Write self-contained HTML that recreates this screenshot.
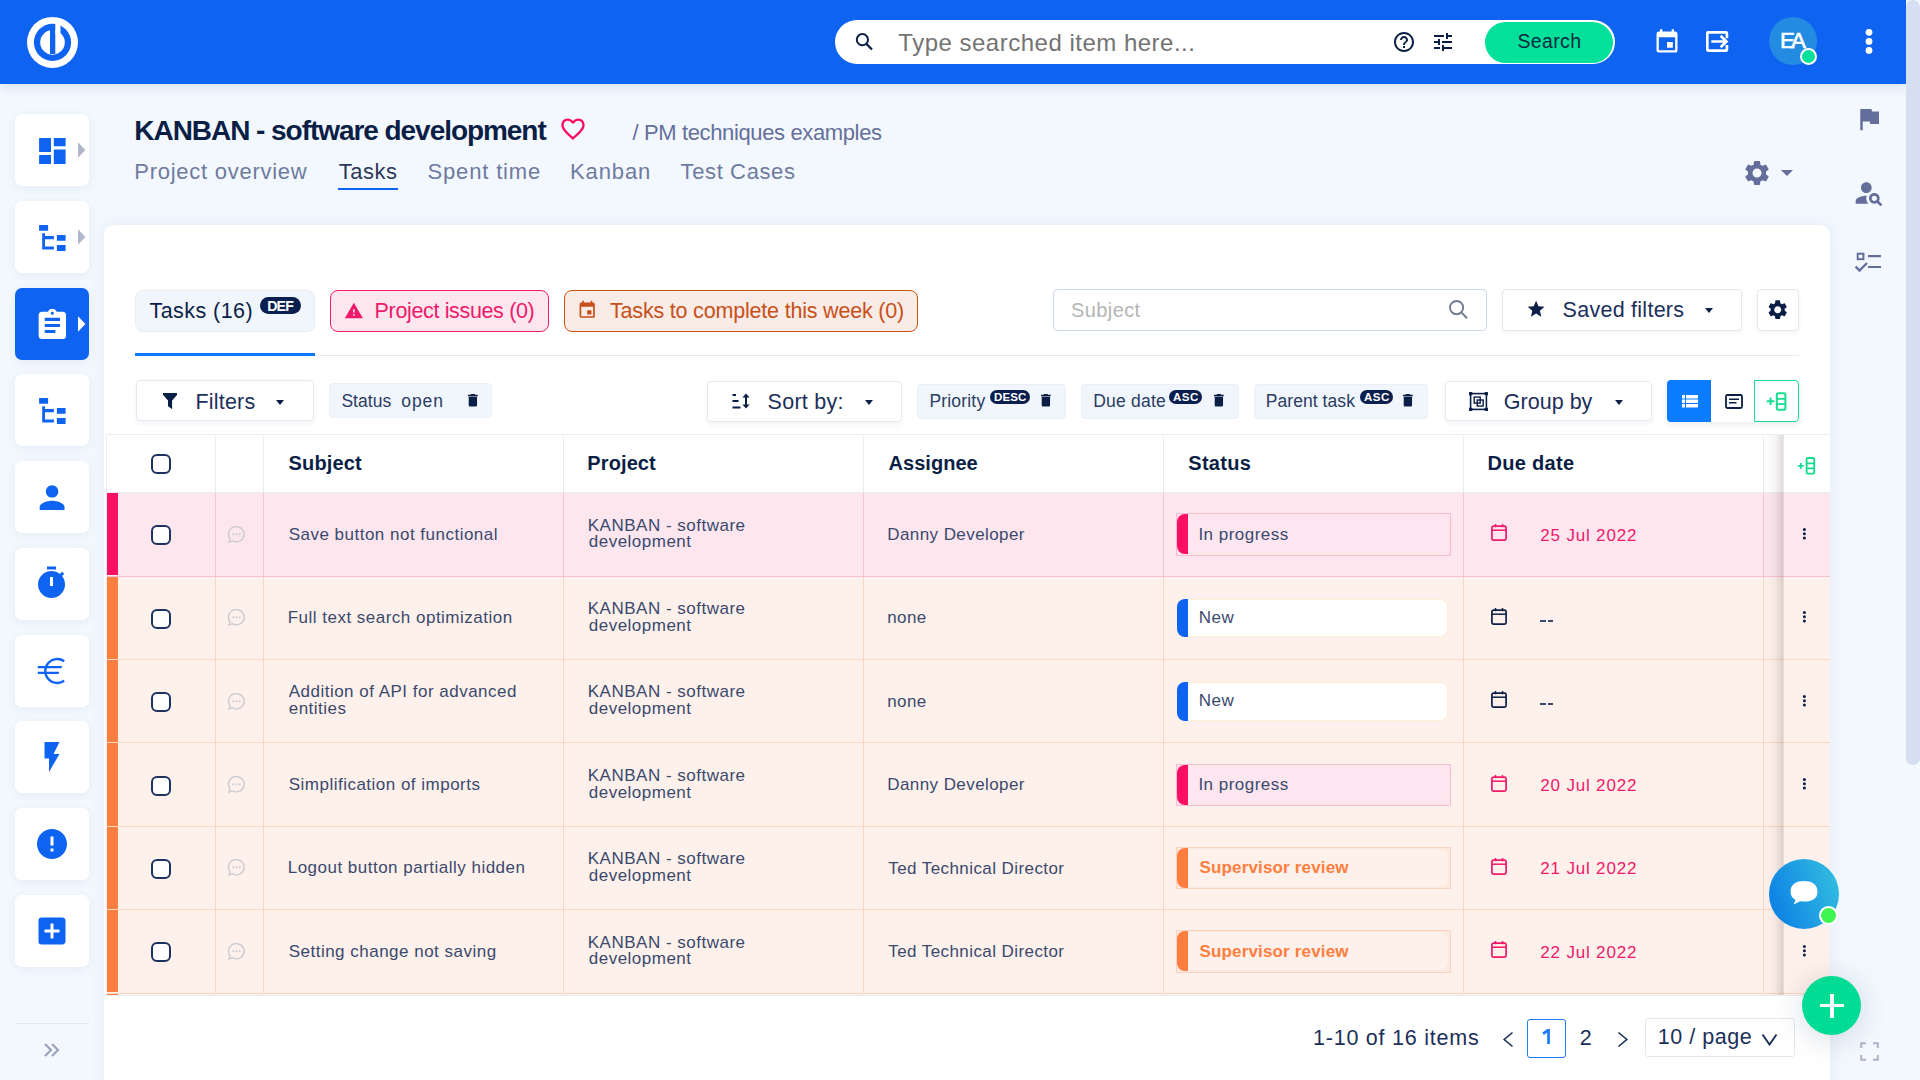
<!DOCTYPE html>
<html><head><meta charset="utf-8">
<style>
*{box-sizing:border-box;margin:0;padding:0}
html,body{width:1920px;height:1080px;overflow:hidden}
body{font-family:"Liberation Sans",sans-serif;background:#f3f8fe;position:relative;color:#0b1f46}
svg{position:absolute;display:block}
#hdr{position:absolute;left:0;top:0;width:1906px;height:84px;background:#0f63f1;box-shadow:0 3px 12px rgba(30,60,120,.13)}
#sb{position:absolute;left:1906px;top:0;width:14px;height:1080px;background:#f3f8fe}
#sbthumb{position:absolute;left:1906px;top:0;width:14px;height:765px;background:#d6dff1;border-radius:7px}
.navc{position:absolute;left:15px;width:74px;height:72px;background:#fff;border-radius:7px;box-shadow:0 2px 10px rgba(40,70,140,.07)}
.navc.act{background:#0f63f1}
.navc svg{left:0;top:0}
.txt{position:absolute;white-space:nowrap;line-height:1}
#card{position:absolute;left:104px;top:225px;width:1726px;height:900px;background:#fff;border-radius:10px;box-shadow:0 0 16px rgba(40,80,160,.07)}
</style></head>
<body>
<div id="hdr"></div><div id="sb"></div><div id="sbthumb"></div>
<svg style="left:0px;top:0px;" width="110" height="84" viewBox="0 0 110 84">
 <circle cx="52.5" cy="42.4" r="25.5" fill="#fff"/>
 <circle cx="52.5" cy="42.4" r="18.6" fill="#0f63f1"/>
 <circle cx="52.5" cy="42.4" r="12.3" fill="#fff"/>
 <rect x="50" y="24" width="5.3" height="30" fill="#0f63f1"/>
 <rect x="55.3" y="23" width="5.2" height="10.6" fill="#fff"/></svg>
<div style="position:absolute;left:835px;top:20px;width:780px;height:44px;background:#fff;border-radius:22px"></div>
<svg style="left:853px;top:31px;" width="22" height="22" viewBox="0 0 22 22"><circle cx="9.4" cy="8.7" r="5.6" fill="none" stroke="#0b1f46" stroke-width="2"/><path d="M13.4 12.9l5.6 5.6" stroke="#0b1f46" stroke-width="2.2"/></svg>
<div class="txt" style="left:898.30px;top:31.03px;font-size:24px;color:#737373;letter-spacing:0.50px;">Type searched item here...</div>
<svg style="left:1392px;top:30px;" width="24" height="24" viewBox="0 0 24 24"><path fill="#0b1f46" d="M11 18h2v-2h-2v2zm1-16C6.48 2 2 6.48 2 12s4.48 10 10 10 10-4.48 10-10S17.52 2 12 2zm0 18c-4.41 0-8-3.59-8-8s3.59-8 8-8 8 3.59 8 8-3.59 8-8 8zm0-14c-2.21 0-4 1.79-4 4h2c0-1.1.9-2 2-2s2 .9 2 2c0 2-3 1.750-3 5h2c0-2.25 3-2.5 3-5 0-2.21-1.79-4-4-4z"/></svg>
<svg style="left:1431px;top:30px;" width="24" height="24" viewBox="0 0 24 24"><path fill="#0b1f46" d="M3 17v2h6v-2H3zM3 5v2h10V5H3zm10 16v-2h8v-2h-8v-2h-2v6h2zM7 9v2H3v2h4v2h2V9H7zm14 4v-2H11v2h10zm-6-4h2V7h4V5h-4V3h-2v6z"/></svg>
<div style="position:absolute;left:1485px;top:22px;width:128px;height:41px;background:#02e09a;border-radius:21px"></div>
<div class="txt" style="left:1517.50px;top:32.24px;font-size:19.5px;color:#0b2a40;letter-spacing:0.35px;">Search</div>
<svg style="left:1653px;top:28px;" width="28" height="28" viewBox="0 0 24 24"><path fill="#fff" d="M17 12h-5v5h5v-5zM16 1v2H8V1H6v2H5c-1.11 0-1.99.9-1.99 2L3 19a2 2 0 0 0 2 2h14c1.1 0 2-.9 2-2V5c0-1.1-.9-2-2-2h-1V1h-2zm3 18H5V8h14v11z"/></svg>
<svg style="left:1706px;top:31px;" width="22.5" height="21" viewBox="0 0 22.5 21"><path fill="none" stroke="#fff" stroke-width="2.7" d="M20.9 7.2V2.6q0-1.3-1.3-1.3H2.6q-1.3 0-1.3 1.3v15.8q0 1.3 1.3 1.3h17q1.3 0 1.3-1.3v-4.3"/><path fill="none" stroke="#fff" stroke-width="2.7" d="M5.3 10.5h15.2M14.6 4.8l5.8 5.7-5.8 5.7"/></svg>
<div style="position:absolute;left:1769px;top:17px;width:48px;height:48px;border-radius:50%;background:#238be2"></div>
<div class="txt" style="left:1780.00px;top:30.39px;font-size:22.4px;color:#fff;letter-spacing:-3.93px;-webkit-text-stroke:.6px #fff;">EA</div>
<div style="position:absolute;left:1799.5px;top:47.5px;width:17.5px;height:17.5px;border-radius:50%;background:#02e09a;border:2.5px solid #fff"></div>
<svg style="left:1857px;top:26px;" width="24" height="32" viewBox="0 0 24 32"><circle cx="12" cy="6.3" r="3.4" fill="#fff"/><circle cx="12" cy="15.4" r="3.4" fill="#fff"/><circle cx="12" cy="24.4" r="3.4" fill="#fff"/></svg>
<div class="navc" style="top:114.0px"><svg width="74" height="72" viewBox="0 0 74 72"><path fill="#0f63f1" d="M24.1 24h11.9v14H24.1zM24.1 41h11.9v9H24.1zM38.8 24h11.8v8.3H38.8zM38.8 35.5h11.8V50H38.8z"/><path fill="#b1b6cb" d="M63 28.2l7.4 7.8-7.4 7.8z"/></svg></div>
<div class="navc" style="top:200.78px"><svg width="74" height="72" viewBox="0 0 74 72"><path fill="#0f63f1" d="M24.1 24h9v5.7h-9zM27.2 32.3h2.8v16.3h-2.8zM27.2 35.1h11.7v3.1H27.2zM27.2 45.5h11.7v3.1H27.2zM41.9 34.1h8.7v5.7h-8.7zM41.9 44.1h8.7v5.8h-8.7z"/><path fill="#b1b6cb" d="M63 28.2l7.4 7.8-7.4 7.8z"/></svg></div>
<div class="navc act" style="top:287.56px"><svg width="74" height="72" viewBox="0 0 74 72"><g transform="translate(19.1 19.2) scale(1.52)"><path fill="#fff" d="M19 3h-4.18C14.4 1.84 13.3 1 12 1c-1.3 0-2.4.84-2.82 2H5c-1.1 0-2 .9-2 2v14c0 1.1.9 2 2 2h14c1.1 0 2-.9 2-2V5c0-1.1-.9-2-2-2zm-7 0c.55 0 1 .45 1 1s-.45 1-1 1-1-.45-1-1 .45-1 1-1zm2 14H7v-2h7v2zm3-4H7v-2h10v2zm0-4H7V7h10v2z"/></g><path fill="#fff" d="M63 28.2l7.4 7.8-7.4 7.8z"/></svg></div>
<div class="navc" style="top:374.34px"><svg width="74" height="72" viewBox="0 0 74 72"><path fill="#0f63f1" d="M24.1 24h9v5.7h-9zM27.2 32.3h2.8v16.3h-2.8zM27.2 35.1h11.7v3.1H27.2zM27.2 45.5h11.7v3.1H27.2zM41.9 34.1h8.7v5.7h-8.7zM41.9 44.1h8.7v5.8h-8.7z"/></svg></div>
<div class="navc" style="top:461.12px"><svg width="74" height="72" viewBox="0 0 74 72"><g transform="translate(18.5 18) scale(1.55)"><path fill="#0f63f1" d="M12 12c2.21 0 4-1.79 4-4s-1.79-4-4-4-4 1.79-4 4 1.79 4 4 4zm0 2c-2.67 0-8 1.34-8 4v2h16v-2c0-2.66-5.33-4-8-4z"/></g></svg></div>
<div class="navc" style="top:547.9px"><svg width="74" height="72" viewBox="0 0 74 72"><g transform="translate(18.5 17) scale(1.5)"><path fill="#0f63f1" d="M15 1H9v2h6V1zm4.03 6.39l1.42-1.42c-.43-.51-.9-.99-1.41-1.41l-1.42 1.42C16.07 4.74 14.12 4 12 4c-4.97 0-9 4.03-9 9s4.02 9 9 9 9-4.03 9-9c0-2.12-.74-4.07-1.97-5.61zM13 14h-2V8h2v6z"/></g></svg></div>
<div class="navc" style="top:634.68px"><svg width="74" height="72" viewBox="0 0 74 72"><path fill="none" stroke="#0f63f1" stroke-width="2.3" d="M49.2 26.2A12 12 0 1 0 49.2 45.8"/><path fill="#0f63f1" d="M22.8 30.9h24.4l-.9 2.3H22.8zM22.8 36.7h21.6l-.9 2.3H22.8z"/></svg></div>
<div class="navc" style="top:721.46px"><svg width="74" height="72" viewBox="0 0 74 72"><g transform="translate(19 18) scale(1.5)"><path fill="#0f63f1" d="M7 2v11h3v9l7-12h-4l4-8z"/></g></svg></div>
<div class="navc" style="top:808.24px"><svg width="74" height="72" viewBox="0 0 74 72"><g transform="translate(19 18) scale(1.5)"><path fill="#0f63f1" d="M12 2C6.48 2 2 6.48 2 12s4.48 10 10 10 10-4.48 10-10S17.52 2 12 2zm1 15h-2v-2h2v2zm0-4h-2V7h2v6z"/></g></svg></div>
<div class="navc" style="top:895.02px"><svg width="74" height="72" viewBox="0 0 74 72"><g transform="translate(19 18) scale(1.5)"><path fill="#0f63f1" d="M19 3H5a2 2 0 0 0-2 2v14a2 2 0 0 0 2 2h14c1.1 0 2-.9 2-2V5c0-1.1-.9-2-2-2zm-2 10h-4v4h-2v-4H7v-2h4V7h2v4h4v2z"/></g></svg></div>
<div style="position:absolute;left:15px;top:1023px;width:74px;height:1px;background:#e1e7f3"></div>
<svg style="left:40px;top:1038px;" width="24" height="24" viewBox="0 0 24 24"><path fill="none" stroke="#9aa3bd" stroke-width="2.2" d="M5 6l6 6-6 6M12 6l6 6-6 6"/></svg>
<svg style="left:1854px;top:104px;" width="30" height="30" viewBox="0 0 24 24"><path fill="#646e9a" d="M14.4 6L14 4H5v17h2v-7h5.6l.4 2h7V6z"/></svg>
<svg style="left:1853px;top:177px;" width="32" height="32" viewBox="0 0 24 24"><path fill="#646e9a" d="M10 12c2.21 0 4-1.79 4-4s-1.79-4-4-4-4 1.79-4 4 1.79 4 4 4zm.35 2.01C7.62 13.91 2 15.27 2 18v2h9.54c-2.47-2.76-1.23-5.89-1.19-5.99zm9.08 4.01c.36-.59.57-1.28.57-2.02 0-2.21-1.79-4-4-4s-4 1.79-4 4 1.79 4 4 4c.74 0 1.43-.22 2.02-.57L20.59 22 22 20.59l-2.57-2.57zM16 18c-1.1 0-2-.9-2-2s.9-2 2-2 2 .9 2 2-.9 2-2 2z"/></svg>
<svg style="left:1850px;top:245px;" width="36" height="30" viewBox="0 0 36 30"><rect x="7.7" y="8.7" width="5.7" height="5.5" fill="none" stroke="#646e9a" stroke-width="2"/><path d="M18 11.2H31M18 22H31" stroke="#646e9a" stroke-width="2.2"/><path d="M5.6 21.5L9.5 25.5L17 18" fill="none" stroke="#646e9a" stroke-width="2.4"/></svg>
<div class="txt" style="left:134.30px;top:116.55px;font-size:28px;color:#0b1f46;font-weight:bold;letter-spacing:-1.05px;">KANBAN - software development</div>
<svg style="left:559px;top:115px;" width="28" height="28" viewBox="0 0 24 24"><path fill="#fb0c5f" d="M16.5 3c-1.74 0-3.41.81-4.5 2.09C10.91 3.81 9.24 3 7.5 3 4.42 3 2 5.42 2 8.5c0 3.78 3.4 6.86 8.55 11.54L12 21.35l1.45-1.32C18.6 15.36 22 12.28 22 8.5 22 5.42 19.58 3 16.5 3zm-4.4 15.55l-.1.1-.1-.1C7.14 14.24 4 11.39 4 8.5 4 6.5 5.5 5 7.5 5c1.54 0 3.04.99 3.57 2.36h1.87C13.46 5.99 14.96 5 16.5 5c2 0 3.5 1.5 3.5 3.5 0 2.89-3.14 5.74-7.9 10.05z"/></svg>
<div class="txt" style="left:632.50px;top:121.63px;font-size:22px;color:#65709a;letter-spacing:-0.37px;">/ PM techniques examples</div>
<div class="txt" style="left:134.30px;top:160.93px;font-size:22px;color:#6e7ba0;letter-spacing:0.73px;">Project overview</div>
<div class="txt" style="left:338.80px;top:160.93px;font-size:22px;color:#2c3a5a;letter-spacing:0.49px;">Tasks</div>
<div style="position:absolute;left:338px;top:188px;width:60px;height:2px;background:#0f63f1"></div>
<div class="txt" style="left:427.50px;top:160.93px;font-size:22px;color:#6e7ba0;letter-spacing:0.84px;">Spent time</div>
<div class="txt" style="left:570.00px;top:160.93px;font-size:22px;color:#6e7ba0;letter-spacing:0.88px;">Kanban</div>
<div class="txt" style="left:680.50px;top:160.93px;font-size:22px;color:#6e7ba0;letter-spacing:0.63px;">Test Cases</div>
<svg style="left:1742px;top:158px;" width="30" height="30" viewBox="0 0 24 24"><path fill="#646e9a" d="M19.14 12.94c.04-.3.06-.61.06-.94 0-.32-.02-.64-.07-.94l2.03-1.58a.49.49 0 0 0 .12-.61l-1.92-3.32a.488.488 0 0 0-.59-.22l-2.39.96c-.5-.38-1.03-.7-1.62-.94l-.36-2.54a.484.484 0 0 0-.48-.41h-3.84c-.24 0-.43.17-.47.41l-.36 2.54c-.59.24-1.13.57-1.62.94l-2.39-.96c-.22-.08-.47 0-.59.22L2.74 8.87c-.12.21-.08.47.12.61l2.03 1.58c-.05.3-.09.63-.09.94s.02.64.07.94l-2.03 1.58a.49.49 0 0 0-.12.61l1.92 3.32c.12.22.37.29.59.22l2.39-.96c.5.38 1.03.7 1.62.94l.36 2.54c.05.24.24.41.48.41h3.84c.24 0 .44-.17.47-.41l.36-2.54c.59-.24 1.13-.56 1.62-.94l2.39.96c.22.08.47 0 .59-.22l1.92-3.32c.12-.22.07-.47-.12-.61l-2.01-1.58zM12 15.6c-1.98 0-3.6-1.62-3.6-3.6s1.62-3.6 3.6-3.6 3.6 1.62 3.6 3.6-1.62 3.6-3.6 3.6z"/></svg>
<svg style="left:1780px;top:169px;" width="14" height="8" viewBox="0 0 14 8"><path fill="#646e9a" d="M1 1h12l-6 6z"/></svg>
<div id="card"></div>
<div style="position:absolute;left:135px;top:290px;width:180px;height:42px;background:#f1f6fd;border:1px solid #e8edf5;border-radius:8px"></div>
<div class="txt" style="left:149.50px;top:301.05px;font-size:21.5px;color:#0b1f46;letter-spacing:0.44px;">Tasks (16)</div>
<div style="position:absolute;left:260px;top:296.7px;width:41px;height:17.7px;background:#0a1f4e;border-radius:9px"></div>
<div class="txt" style="left:267.20px;top:298.93px;font-size:14.2px;color:#fff;font-weight:bold;letter-spacing:-0.85px;">DEF</div>
<div style="position:absolute;left:135px;top:353px;width:180px;height:3px;background:#0a7bff"></div>
<div style="position:absolute;left:315px;top:354.5px;width:1484px;height:1px;background:#e6e9ef"></div>
<div style="position:absolute;left:330px;top:290px;width:219px;height:42px;background:#fde7ef;border:1px solid #f5196b;border-radius:8px"></div>
<svg style="left:343.6px;top:301px;" width="19.75" height="19.75" viewBox="0 0 24 24"><path fill="#f0196a" d="M1 21h22L12 2 1 21zm12-3h-2v-2h2v2zm0-4h-2v-4h2v4z"/></svg>
<div class="txt" style="left:374.60px;top:301.30px;font-size:21.5px;color:#f0196a;letter-spacing:-0.35px;">Project issues (0)</div>
<div style="position:absolute;left:564px;top:290px;width:354px;height:42px;background:#f9ebe6;border:1px solid #cf4f0e;border-radius:8px"></div>
<svg style="left:577.45px;top:300.45px;" width="20.4" height="20.4" viewBox="0 0 24 24"><path fill="#c8501a" d="M17 12h-5v5h5v-5zM16 1v2H8V1H6v2H5c-1.11 0-1.99.9-1.99 2L3 19a2 2 0 0 0 2 2h14c1.1 0 2-.9 2-2V5c0-1.1-.9-2-2-2h-1V1h-2zm3 18H5V8h14v11z"/></svg>
<div class="txt" style="left:610.00px;top:301.05px;font-size:21.5px;color:#c8501a;letter-spacing:-0.19px;">Tasks to complete this week (0)</div>
<div style="position:absolute;left:1053px;top:289px;width:434px;height:42px;background:#fff;border:1.5px solid #cfd9f0;border-radius:4px"></div>
<div class="txt" style="left:1071.00px;top:300.22px;font-size:20px;color:#b5b5b5;letter-spacing:0.41px;">Subject</div>
<svg style="left:1447px;top:298px;" width="24" height="24" viewBox="0 0 24 24"><circle cx="9.6" cy="9.6" r="6.6" fill="none" stroke="#6f7b95" stroke-width="1.9"/><path d="M14.4 14.4l5.6 5.8" stroke="#6f7b95" stroke-width="2"/></svg>
<div style="position:absolute;left:1502px;top:289px;width:240px;height:42px;background:#fff;border:1px solid #e3e7ee;border-radius:4px;box-shadow:0 2px 4px rgba(20,40,80,.05)"></div>
<svg style="left:1526.3px;top:299.1px;" width="20.2" height="20.2" viewBox="0 0 24 24"><path fill="#0b1f46" d="M12 17.27L18.18 21l-1.64-7.03L22 9.24l-7.19-.61L12 2 9.19 8.63 2 9.24l5.46 4.73L5.82 21z"/></svg>
<div class="txt" style="left:1562.60px;top:300.25px;font-size:21.5px;color:#1c2f5a;letter-spacing:0.26px;">Saved filters</div>
<svg style="left:1705px;top:307.5px;" width="8" height="5" viewBox="0 0 8 5"><path fill="#0b1f46" d="M0 0H8L4.0 5z"/></svg>
<div style="position:absolute;left:1757px;top:289px;width:42px;height:42px;background:#fff;border:1px solid #e3e7ee;border-radius:4px;box-shadow:0 2px 4px rgba(20,40,80,.05)"></div>
<svg style="left:1766.4px;top:298.4px;" width="23.4" height="23.4" viewBox="0 0 24 24"><path fill="#0b1f46" d="M19.14 12.94c.04-.3.06-.61.06-.94 0-.32-.02-.64-.07-.94l2.03-1.58a.49.49 0 0 0 .12-.61l-1.92-3.32a.488.488 0 0 0-.59-.22l-2.39.96c-.5-.38-1.03-.7-1.62-.94l-.36-2.54a.484.484 0 0 0-.48-.41h-3.84c-.24 0-.43.17-.47.41l-.36 2.54c-.59.24-1.130.57-1.62.94l-2.39-.96c-.22-.08-.47 0-.59.22L2.74 8.87c-.12.21-.08.47.12.61l2.03 1.58c-.05.3-.09.63-.09.94s.02.64.07.94l-2.03 1.58a.49.49 0 0 0-.12.61l1.92 3.32c.12.22.37.29.59.22l2.39-.96c.5.38 1.03.7 1.62.94l.36 2.54c.05.24.24.41.48.41h3.84c.24 0 .44-.17.47-.41l.36-2.54c.59-.24 1.13-.56 1.62-.94l2.39.96c.22.08.47 0 .59-.22l1.92-3.32c.12-.22.07-.47-.12-.61l-2.01-1.58zM12 15.6c-1.98 0-3.6-1.62-3.6-3.6s1.62-3.6 3.6-3.6 3.6 1.62 3.6 3.6-1.62 3.6-3.6 3.6z"/></svg>
<div style="position:absolute;left:135.5px;top:380.3px;width:178px;height:41px;background:#fff;border:1px solid #e6e9f0;border-radius:4px;box-shadow:0 3px 5px rgba(20,40,80,.05)"></div>
<svg style="left:162.8px;top:392.8px;" width="14.1" height="16.2" viewBox="0 0 14.1 16.2"><path fill="#0b1f46" d="M0 0H14.1V1.8L9.1 7.6V16.2L5 13.2V7.6L0 1.8Z"/></svg>
<div class="txt" style="left:195.50px;top:392.05px;font-size:21.5px;color:#1c2f5a;letter-spacing:0.20px;">Filters</div>
<svg style="left:276.4px;top:399.6px;" width="8" height="5" viewBox="0 0 8 5"><path fill="#0b1f46" d="M0 0H8L4.0 5z"/></svg>
<div style="position:absolute;left:329.4px;top:383.25px;width:163px;height:35px;background:#f1f6fd;border:1px solid #ebf0f7;border-radius:4px"></div>
<div class="txt" style="left:341.40px;top:393.34px;font-size:17.5px;color:#2a3c63;letter-spacing:0.03px;">Status</div>
<div class="txt" style="left:401.25px;top:393.34px;font-size:17.5px;color:#2a3c63;letter-spacing:0.93px;">open</div>
<svg style="left:463.7px;top:392.315px;overflow:visible" width="17.759999999999998" height="16.68" viewBox="0 0 24 24"><path fill="#0b1f46" d="M6 19c0 1.1.9 2 2 2h8c1.1 0 2-.9 2-2V7H6v12zM19 4h-3.5l-1-1h-5l-1 1H5v2h14V4z"/></svg>
<div style="position:absolute;left:707.4px;top:380.6px;width:195px;height:41px;background:#fff;border:1px solid #e6e9f0;border-radius:4px;box-shadow:0 3px 5px rgba(20,40,80,.05)"></div>
<svg style="left:732px;top:393px;" width="19" height="16" viewBox="0 0 19 16"><path fill="#0b1f46" d="M0.5 1h3.5v2H0.5zM0.5 7h6v2h-6zM0.5 13.5h8v2h-8z"/><path fill="#0b1f46" d="M14 0.5l-3.6 4h2.6v7h-2.6l3.6 4 3.6-4h-2.6v-7h2.6z"/></svg>
<div class="txt" style="left:767.60px;top:392.25px;font-size:21.5px;color:#1c2f5a;letter-spacing:0.27px;">Sort by:</div>
<svg style="left:865px;top:400px;" width="8" height="5" viewBox="0 0 8 5"><path fill="#0b1f46" d="M0 0H8L4.0 5z"/></svg>
<div style="position:absolute;left:917px;top:383.5px;width:149px;height:35px;background:#f1f6fd;border:1px solid #ebf0f7;border-radius:4px"></div>
<div class="txt" style="left:929.40px;top:393.44px;font-size:17.5px;color:#2a3c63;letter-spacing:0.19px;">Priority</div>
<div style="position:absolute;left:990px;top:389.7px;width:40px;height:14.2px;background:#0a1f4e;border-radius:7.1px"></div>
<div class="txt" style="left:994.00px;top:392.12px;font-size:11.5px;color:#fff;font-weight:bold;letter-spacing:0.12px;">DESC</div>
<svg style="left:1037.3px;top:392.315px;overflow:visible" width="17.759999999999998" height="16.68" viewBox="0 0 24 24"><path fill="#0b1f46" d="M6 19c0 1.1.9 2 2 2h8c1.1 0 2-.9 2-2V7H6v12zM19 4h-3.5l-1-1h-5l-1 1H5v2h14V4z"/></svg>
<div style="position:absolute;left:1081px;top:383.5px;width:158px;height:35px;background:#f1f6fd;border:1px solid #ebf0f7;border-radius:4px"></div>
<div class="txt" style="left:1093.20px;top:393.44px;font-size:17.5px;color:#2a3c63;letter-spacing:0.22px;">Due date</div>
<div style="position:absolute;left:1169px;top:389.7px;width:33px;height:14.2px;background:#0a1f4e;border-radius:7.1px"></div>
<div class="txt" style="left:1173.00px;top:392.12px;font-size:11.5px;color:#fff;font-weight:bold;letter-spacing:0.51px;">ASC</div>
<svg style="left:1209.5px;top:392.315px;overflow:visible" width="17.759999999999998" height="16.68" viewBox="0 0 24 24"><path fill="#0b1f46" d="M6 19c0 1.1.9 2 2 2h8c1.1 0 2-.9 2-2V7H6v12zM19 4h-3.5l-1-1h-5l-1 1H5v2h14V4z"/></svg>
<div style="position:absolute;left:1254.4px;top:383.5px;width:174px;height:35px;background:#f1f6fd;border:1px solid #ebf0f7;border-radius:4px"></div>
<div class="txt" style="left:1265.70px;top:393.44px;font-size:17.5px;color:#2a3c63;letter-spacing:0.07px;">Parent task</div>
<div style="position:absolute;left:1360px;top:390px;width:33px;height:13.8px;background:#0a1f4e;border-radius:7px"></div>
<div class="txt" style="left:1364.00px;top:392.22px;font-size:11.5px;color:#fff;font-weight:bold;letter-spacing:0.51px;">ASC</div>
<svg style="left:1399.3px;top:392.315px;overflow:visible" width="17.759999999999998" height="16.68" viewBox="0 0 24 24"><path fill="#0b1f46" d="M6 19c0 1.1.9 2 2 2h8c1.1 0 2-.9 2-2V7H6v12zM19 4h-3.5l-1-1h-5l-1 1H5v2h14V4z"/></svg>
<div style="position:absolute;left:1444.7px;top:380.9px;width:207px;height:40.5px;background:#fff;border:1px solid #e6e9f0;border-radius:4px;box-shadow:0 3px 5px rgba(20,40,80,.05)"></div>
<svg style="left:1469px;top:391.6px;" width="19" height="19" viewBox="0 0 19 19"><rect x="1.6" y="1.6" width="15.8" height="15.8" fill="none" stroke="#0b1f46" stroke-width="1.6"/><rect x="0" y="0" width="3.3" height="3.3" rx=".6" fill="#0b1f46"/><rect x="15.7" y="0" width="3.3" height="3.3" rx=".6" fill="#0b1f46"/><rect x="0" y="15.7" width="3.3" height="3.3" rx=".6" fill="#0b1f46"/><rect x="15.7" y="15.7" width="3.3" height="3.3" rx=".6" fill="#0b1f46"/><rect x="5.2" y="5.1" width="6" height="6" fill="none" stroke="#0b1f46" stroke-width="1.4"/><rect x="8.2" y="8" width="6" height="6" fill="none" stroke="#0b1f46" stroke-width="1.4"/></svg>
<div class="txt" style="left:1503.80px;top:392.05px;font-size:21.5px;color:#1c2f5a;letter-spacing:0.02px;">Group by</div>
<svg style="left:1615px;top:400px;" width="8" height="5" viewBox="0 0 8 5"><path fill="#0b1f46" d="M0 0H8L4.0 5z"/></svg>
<div style="position:absolute;left:1667px;top:380px;width:132px;height:42px;border-radius:4px;box-shadow:0 3px 6px rgba(20,40,80,.09);background:#fff"></div>
<div style="position:absolute;left:1667px;top:380px;width:44px;height:42px;background:#0a7cff;border-radius:4px 0 0 4px"></div>
<svg style="left:1682px;top:395px;" width="16" height="12.5" viewBox="0 0 16 12.5"><path fill="#fff" d="M0 0h3v3.6H0zM4 0h12v3.6H4zM0 4.45h3v3.6H0zM4 4.45h12v3.6H4zM0 8.9h3v3.6H0zM4 8.9h12v3.6H4z"/></svg>
<svg style="left:1724.5px;top:393.5px;" width="18" height="15" viewBox="0 0 18 15"><rect x="1" y="1" width="16" height="13" rx="1.5" fill="none" stroke="#0b1f46" stroke-width="1.8"/><path d="M4 5.2h10M4 8.8h7.5" stroke="#0b1f46" stroke-width="1.6"/></svg>
<div style="position:absolute;left:1754px;top:380px;width:45px;height:42px;background:#fff;border:1.5px solid #17dc8f;border-radius:0 4px 4px 0"></div>
<svg style="left:1766px;top:391.5px;" width="21" height="19" viewBox="0 0 21 19"><path fill="#17dc8f" d="M0.8 8.3h7.6v2H0.8zM3.6 5.5h2v7.6h-2z"/><rect x="10.8" y="1.2" width="8.6" height="16.6" rx="1.3" fill="none" stroke="#17dc8f" stroke-width="2"/><path d="M10.8 6.8h8.6M10.8 12.2h8.6" stroke="#17dc8f" stroke-width="1.8"/></svg>
<div style="position:absolute;left:105.5px;top:433.5px;width:1724.5px;height:562px;border:1px solid #e8ecf3;border-right:none"></div>
<div style="position:absolute;left:106.5px;top:434.5px;width:1723px;height:57.5px;background:#fff"></div>
<div style="position:absolute;left:106.5px;top:491.5px;width:1723px;height:1px;background:#e8ecf3"></div>
<div style="position:absolute;left:215px;top:436px;width:1px;height:56px;background:#e9ecf3"></div>
<div style="position:absolute;left:263px;top:436px;width:1px;height:56px;background:#e9ecf3"></div>
<div style="position:absolute;left:563px;top:436px;width:1px;height:56px;background:#e9ecf3"></div>
<div style="position:absolute;left:863px;top:436px;width:1px;height:56px;background:#e9ecf3"></div>
<div style="position:absolute;left:1163px;top:436px;width:1px;height:56px;background:#e9ecf3"></div>
<div style="position:absolute;left:1463px;top:436px;width:1px;height:56px;background:#e9ecf3"></div>
<div style="position:absolute;left:1763px;top:436px;width:1px;height:56px;background:#e9ecf3"></div>
<div style="position:absolute;left:151px;top:454px;width:20px;height:20px;border:2px solid #1c3260;border-radius:6px;background:#fff"></div>
<div class="txt" style="left:288.60px;top:453.32px;font-size:20px;color:#0b1f46;font-weight:bold;letter-spacing:0.12px;">Subject</div>
<div class="txt" style="left:587.30px;top:453.32px;font-size:20px;color:#0b1f46;font-weight:bold;letter-spacing:0.11px;">Project</div>
<div class="txt" style="left:888.60px;top:453.32px;font-size:20px;color:#0b1f46;font-weight:bold;letter-spacing:0.03px;">Assignee</div>
<div class="txt" style="left:1188.30px;top:453.32px;font-size:20px;color:#0b1f46;font-weight:bold;letter-spacing:0.28px;">Status</div>
<div class="txt" style="left:1487.60px;top:453.32px;font-size:20px;color:#0b1f46;font-weight:bold;letter-spacing:0.28px;">Due date</div>
<div style="position:absolute;left:106.5px;top:493.1px;width:1723px;height:83.4px;background:#fde6ee"></div>
<div style="position:absolute;left:106.5px;top:575.5px;width:1723px;height:1px;background:#f9c0d5"></div>
<div style="position:absolute;left:215px;top:493.1px;width:1px;height:83.4px;background:#f9c0d5"></div>
<div style="position:absolute;left:263px;top:493.1px;width:1px;height:83.4px;background:#f9c0d5"></div>
<div style="position:absolute;left:563px;top:493.1px;width:1px;height:83.4px;background:#f9c0d5"></div>
<div style="position:absolute;left:863px;top:493.1px;width:1px;height:83.4px;background:#f9c0d5"></div>
<div style="position:absolute;left:1163px;top:493.1px;width:1px;height:83.4px;background:#f9c0d5"></div>
<div style="position:absolute;left:1463px;top:493.1px;width:1px;height:83.4px;background:#f9c0d5"></div>
<div style="position:absolute;left:1763px;top:493.1px;width:1px;height:83.4px;background:#f9c0d5"></div>
<div style="position:absolute;left:107px;top:493.1px;width:11px;height:82.4px;background:#fb0f63"></div>
<div style="position:absolute;left:151px;top:525.3000000000001px;width:20px;height:20px;border:2px solid #1c3260;border-radius:6px;background:#fff"></div>
<svg style="left:227px;top:524.8000000000001px;" width="19" height="19" viewBox="0 0 19 19"><path d="M9.5 1.6a7.6 7.6 0 1 1 -3.9 14.1l-3.6 1.4 1.1-3.3A7.6 7.6 0 0 1 9.5 1.6z" fill="none" stroke="#c9c9d0" stroke-width="1.3"/><circle cx="6.3" cy="9.3" r=".95" fill="#c9c9d0"/><circle cx="9.5" cy="9.3" r=".95" fill="#c9c9d0"/><circle cx="12.7" cy="9.3" r=".95" fill="#c9c9d0"/></svg>
<div class="txt" style="left:288.70px;top:525.71px;font-size:17px;color:#3a4a6e;letter-spacing:0.49px;">Save button not functional</div>
<div class="txt" style="left:587.75px;top:516.66px;font-size:17px;color:#3a4a6e;letter-spacing:0.50px;">KANBAN - software</div>
<div class="txt" style="left:588.75px;top:533.41px;font-size:17px;color:#3a4a6e;letter-spacing:0.49px;">development</div>
<div class="txt" style="left:887.25px;top:525.91px;font-size:17px;color:#3a4a6e;letter-spacing:0.42px;">Danny Developer</div>
<div style="position:absolute;left:1176px;top:513.4000000000001px;width:275px;height:42.2px;background:#fde3ee;border:1px solid #f9bcd3"></div>
<div style="position:absolute;left:1177px;top:514.4000000000001px;width:272px;height:40px;background:#fde6ef;border:1px solid #fbe9dc;border-radius:8px;overflow:hidden"></div>
<div style="position:absolute;left:1177px;top:514.4000000000001px;width:11px;height:40px;background:#fb0f63;border-radius:8px 0 0 8px"></div>
<div class="txt" style="left:1198.40px;top:525.66px;font-size:17px;color:#3a4a6e;letter-spacing:0.48px;">In progress</div>
<svg style="left:1489.5px;top:523.3000000000001px;" width="18" height="19" viewBox="0 0 18 19"><rect x="1.9" y="3.1" width="14.2" height="14" rx="1.6" fill="none" stroke="#f0196a" stroke-width="1.7"/><path d="M2 7.2h14" stroke="#f0196a" stroke-width="1.5"/><path d="M5.5 1v3.2M12.5 1v3.2" stroke="#f0196a" stroke-width="1.5"/></svg>
<div class="txt" style="left:1540.30px;top:526.81px;font-size:17px;color:#f0196a;letter-spacing:0.82px;">25 Jul 2022</div>
<svg style="left:1801px;top:525.8000000000001px;" width="6" height="14" viewBox="0 0 6 14"><circle cx="3.4" cy="3.5" r="1.5" fill="#0b1f46"/><circle cx="3.4" cy="7.75" r="1.5" fill="#0b1f46"/><circle cx="3.4" cy="12" r="1.5" fill="#0b1f46"/></svg>
<div style="position:absolute;left:106.5px;top:576.5px;width:1723px;height:83.4px;background:#fef0ea"></div>
<div style="position:absolute;left:106.5px;top:658.9px;width:1723px;height:1px;background:#fcd6c2"></div>
<div style="position:absolute;left:215px;top:576.5px;width:1px;height:83.4px;background:#fcd6c2"></div>
<div style="position:absolute;left:263px;top:576.5px;width:1px;height:83.4px;background:#fcd6c2"></div>
<div style="position:absolute;left:563px;top:576.5px;width:1px;height:83.4px;background:#fcd6c2"></div>
<div style="position:absolute;left:863px;top:576.5px;width:1px;height:83.4px;background:#fcd6c2"></div>
<div style="position:absolute;left:1163px;top:576.5px;width:1px;height:83.4px;background:#fcd6c2"></div>
<div style="position:absolute;left:1463px;top:576.5px;width:1px;height:83.4px;background:#fcd6c2"></div>
<div style="position:absolute;left:1763px;top:576.5px;width:1px;height:83.4px;background:#fcd6c2"></div>
<div style="position:absolute;left:107px;top:576.5px;width:11px;height:82.4px;background:#fd7e3f"></div>
<div style="position:absolute;left:151px;top:608.7px;width:20px;height:20px;border:2px solid #1c3260;border-radius:6px;background:#fff"></div>
<svg style="left:227px;top:608.2px;" width="19" height="19" viewBox="0 0 19 19"><path d="M9.5 1.6a7.6 7.6 0 1 1 -3.9 14.1l-3.6 1.4 1.1-3.3A7.6 7.6 0 0 1 9.5 1.6z" fill="none" stroke="#c9c9d0" stroke-width="1.3"/><circle cx="6.3" cy="9.3" r=".95" fill="#c9c9d0"/><circle cx="9.5" cy="9.3" r=".95" fill="#c9c9d0"/><circle cx="12.7" cy="9.3" r=".95" fill="#c9c9d0"/></svg>
<div class="txt" style="left:287.70px;top:609.11px;font-size:17px;color:#3a4a6e;letter-spacing:0.49px;">Full text search optimization</div>
<div class="txt" style="left:587.75px;top:600.06px;font-size:17px;color:#3a4a6e;letter-spacing:0.50px;">KANBAN - software</div>
<div class="txt" style="left:588.75px;top:616.81px;font-size:17px;color:#3a4a6e;letter-spacing:0.49px;">development</div>
<div class="txt" style="left:887.25px;top:609.31px;font-size:17px;color:#3a4a6e;letter-spacing:0.42px;">none</div>
<div style="position:absolute;left:1177px;top:598.5px;width:271px;height:38.7px;background:#fff;border:1px solid #fcefd9;border-radius:8px"></div>
<div style="position:absolute;left:1177px;top:598.5px;width:11px;height:38.7px;background:#0f63f1;border-radius:8px 0 0 8px"></div>
<div class="txt" style="left:1198.70px;top:609.06px;font-size:17px;color:#3a4a6e;letter-spacing:0.53px;">New</div>
<svg style="left:1489.5px;top:606.7px;" width="18" height="19" viewBox="0 0 18 19"><rect x="1.9" y="3.1" width="14.2" height="14" rx="1.6" fill="none" stroke="#0b1f46" stroke-width="1.7"/><path d="M2 7.2h14" stroke="#0b1f46" stroke-width="1.5"/><path d="M5.5 1v3.2M12.5 1v3.2" stroke="#0b1f46" stroke-width="1.5"/></svg>
<div style="position:absolute;left:1540px;top:620px;width:5.5px;height:1.5px;background:#3a4a6e"></div>
<div style="position:absolute;left:1547.5px;top:620px;width:5.5px;height:1.5px;background:#3a4a6e"></div>
<svg style="left:1801px;top:609.2px;" width="6" height="14" viewBox="0 0 6 14"><circle cx="3.4" cy="3.5" r="1.5" fill="#0b1f46"/><circle cx="3.4" cy="7.75" r="1.5" fill="#0b1f46"/><circle cx="3.4" cy="12" r="1.5" fill="#0b1f46"/></svg>
<div style="position:absolute;left:106.5px;top:659.9000000000001px;width:1723px;height:83.4px;background:#fef0ea"></div>
<div style="position:absolute;left:106.5px;top:742.3000000000001px;width:1723px;height:1px;background:#fcd6c2"></div>
<div style="position:absolute;left:215px;top:659.9000000000001px;width:1px;height:83.4px;background:#fcd6c2"></div>
<div style="position:absolute;left:263px;top:659.9000000000001px;width:1px;height:83.4px;background:#fcd6c2"></div>
<div style="position:absolute;left:563px;top:659.9000000000001px;width:1px;height:83.4px;background:#fcd6c2"></div>
<div style="position:absolute;left:863px;top:659.9000000000001px;width:1px;height:83.4px;background:#fcd6c2"></div>
<div style="position:absolute;left:1163px;top:659.9000000000001px;width:1px;height:83.4px;background:#fcd6c2"></div>
<div style="position:absolute;left:1463px;top:659.9000000000001px;width:1px;height:83.4px;background:#fcd6c2"></div>
<div style="position:absolute;left:1763px;top:659.9000000000001px;width:1px;height:83.4px;background:#fcd6c2"></div>
<div style="position:absolute;left:107px;top:659.9000000000001px;width:11px;height:82.4px;background:#fd7e3f"></div>
<div style="position:absolute;left:151px;top:692.1000000000001px;width:20px;height:20px;border:2px solid #1c3260;border-radius:6px;background:#fff"></div>
<svg style="left:227px;top:691.6000000000001px;" width="19" height="19" viewBox="0 0 19 19"><path d="M9.5 1.6a7.6 7.6 0 1 1 -3.9 14.1l-3.6 1.4 1.1-3.3A7.6 7.6 0 0 1 9.5 1.6z" fill="none" stroke="#c9c9d0" stroke-width="1.3"/><circle cx="6.3" cy="9.3" r=".95" fill="#c9c9d0"/><circle cx="9.5" cy="9.3" r=".95" fill="#c9c9d0"/><circle cx="12.7" cy="9.3" r=".95" fill="#c9c9d0"/></svg>
<div class="txt" style="left:288.70px;top:683.46px;font-size:17px;color:#3a4a6e;letter-spacing:0.49px;">Addition of API for advanced</div>
<div class="txt" style="left:288.70px;top:700.21px;font-size:17px;color:#3a4a6e;letter-spacing:0.49px;">entities</div>
<div class="txt" style="left:587.75px;top:683.46px;font-size:17px;color:#3a4a6e;letter-spacing:0.50px;">KANBAN - software</div>
<div class="txt" style="left:588.75px;top:700.21px;font-size:17px;color:#3a4a6e;letter-spacing:0.49px;">development</div>
<div class="txt" style="left:887.25px;top:692.71px;font-size:17px;color:#3a4a6e;letter-spacing:0.42px;">none</div>
<div style="position:absolute;left:1177px;top:681.9000000000001px;width:271px;height:38.7px;background:#fff;border:1px solid #fcefd9;border-radius:8px"></div>
<div style="position:absolute;left:1177px;top:681.9000000000001px;width:11px;height:38.7px;background:#0f63f1;border-radius:8px 0 0 8px"></div>
<div class="txt" style="left:1198.70px;top:692.46px;font-size:17px;color:#3a4a6e;letter-spacing:0.53px;">New</div>
<svg style="left:1489.5px;top:690.1000000000001px;" width="18" height="19" viewBox="0 0 18 19"><rect x="1.9" y="3.1" width="14.2" height="14" rx="1.6" fill="none" stroke="#0b1f46" stroke-width="1.7"/><path d="M2 7.2h14" stroke="#0b1f46" stroke-width="1.5"/><path d="M5.5 1v3.2M12.5 1v3.2" stroke="#0b1f46" stroke-width="1.5"/></svg>
<div style="position:absolute;left:1540px;top:703px;width:5.5px;height:1.5px;background:#3a4a6e"></div>
<div style="position:absolute;left:1547.5px;top:703px;width:5.5px;height:1.5px;background:#3a4a6e"></div>
<svg style="left:1801px;top:692.6000000000001px;" width="6" height="14" viewBox="0 0 6 14"><circle cx="3.4" cy="3.5" r="1.5" fill="#0b1f46"/><circle cx="3.4" cy="7.75" r="1.5" fill="#0b1f46"/><circle cx="3.4" cy="12" r="1.5" fill="#0b1f46"/></svg>
<div style="position:absolute;left:106.5px;top:743.3000000000001px;width:1723px;height:83.4px;background:#fef0ea"></div>
<div style="position:absolute;left:106.5px;top:825.7px;width:1723px;height:1px;background:#fcd6c2"></div>
<div style="position:absolute;left:215px;top:743.3000000000001px;width:1px;height:83.4px;background:#fcd6c2"></div>
<div style="position:absolute;left:263px;top:743.3000000000001px;width:1px;height:83.4px;background:#fcd6c2"></div>
<div style="position:absolute;left:563px;top:743.3000000000001px;width:1px;height:83.4px;background:#fcd6c2"></div>
<div style="position:absolute;left:863px;top:743.3000000000001px;width:1px;height:83.4px;background:#fcd6c2"></div>
<div style="position:absolute;left:1163px;top:743.3000000000001px;width:1px;height:83.4px;background:#fcd6c2"></div>
<div style="position:absolute;left:1463px;top:743.3000000000001px;width:1px;height:83.4px;background:#fcd6c2"></div>
<div style="position:absolute;left:1763px;top:743.3000000000001px;width:1px;height:83.4px;background:#fcd6c2"></div>
<div style="position:absolute;left:107px;top:743.3000000000001px;width:11px;height:82.4px;background:#fd7e3f"></div>
<div style="position:absolute;left:151px;top:775.5000000000001px;width:20px;height:20px;border:2px solid #1c3260;border-radius:6px;background:#fff"></div>
<svg style="left:227px;top:775.0000000000001px;" width="19" height="19" viewBox="0 0 19 19"><path d="M9.5 1.6a7.6 7.6 0 1 1 -3.9 14.1l-3.6 1.4 1.1-3.3A7.6 7.6 0 0 1 9.5 1.6z" fill="none" stroke="#c9c9d0" stroke-width="1.3"/><circle cx="6.3" cy="9.3" r=".95" fill="#c9c9d0"/><circle cx="9.5" cy="9.3" r=".95" fill="#c9c9d0"/><circle cx="12.7" cy="9.3" r=".95" fill="#c9c9d0"/></svg>
<div class="txt" style="left:288.70px;top:775.91px;font-size:17px;color:#3a4a6e;letter-spacing:0.49px;">Simplification of imports</div>
<div class="txt" style="left:587.75px;top:766.86px;font-size:17px;color:#3a4a6e;letter-spacing:0.50px;">KANBAN - software</div>
<div class="txt" style="left:588.75px;top:783.61px;font-size:17px;color:#3a4a6e;letter-spacing:0.49px;">development</div>
<div class="txt" style="left:887.25px;top:776.11px;font-size:17px;color:#3a4a6e;letter-spacing:0.42px;">Danny Developer</div>
<div style="position:absolute;left:1176px;top:763.6000000000001px;width:275px;height:42.2px;background:#fde3ee;border:1px solid #f9bcd3"></div>
<div style="position:absolute;left:1177px;top:764.6000000000001px;width:272px;height:40px;background:#fde6ef;border:1px solid #fbe9dc;border-radius:8px;overflow:hidden"></div>
<div style="position:absolute;left:1177px;top:764.6000000000001px;width:11px;height:40px;background:#fb0f63;border-radius:8px 0 0 8px"></div>
<div class="txt" style="left:1198.40px;top:775.86px;font-size:17px;color:#3a4a6e;letter-spacing:0.48px;">In progress</div>
<svg style="left:1489.5px;top:773.5000000000001px;" width="18" height="19" viewBox="0 0 18 19"><rect x="1.9" y="3.1" width="14.2" height="14" rx="1.6" fill="none" stroke="#f0196a" stroke-width="1.7"/><path d="M2 7.2h14" stroke="#f0196a" stroke-width="1.5"/><path d="M5.5 1v3.2M12.5 1v3.2" stroke="#f0196a" stroke-width="1.5"/></svg>
<div class="txt" style="left:1540.30px;top:777.01px;font-size:17px;color:#f0196a;letter-spacing:0.82px;">20 Jul 2022</div>
<svg style="left:1801px;top:776.0000000000001px;" width="6" height="14" viewBox="0 0 6 14"><circle cx="3.4" cy="3.5" r="1.5" fill="#0b1f46"/><circle cx="3.4" cy="7.75" r="1.5" fill="#0b1f46"/><circle cx="3.4" cy="12" r="1.5" fill="#0b1f46"/></svg>
<div style="position:absolute;left:106.5px;top:826.7px;width:1723px;height:83.4px;background:#fef0ea"></div>
<div style="position:absolute;left:106.5px;top:909.1px;width:1723px;height:1px;background:#fcd6c2"></div>
<div style="position:absolute;left:215px;top:826.7px;width:1px;height:83.4px;background:#fcd6c2"></div>
<div style="position:absolute;left:263px;top:826.7px;width:1px;height:83.4px;background:#fcd6c2"></div>
<div style="position:absolute;left:563px;top:826.7px;width:1px;height:83.4px;background:#fcd6c2"></div>
<div style="position:absolute;left:863px;top:826.7px;width:1px;height:83.4px;background:#fcd6c2"></div>
<div style="position:absolute;left:1163px;top:826.7px;width:1px;height:83.4px;background:#fcd6c2"></div>
<div style="position:absolute;left:1463px;top:826.7px;width:1px;height:83.4px;background:#fcd6c2"></div>
<div style="position:absolute;left:1763px;top:826.7px;width:1px;height:83.4px;background:#fcd6c2"></div>
<div style="position:absolute;left:107px;top:826.7px;width:11px;height:82.4px;background:#fd7e3f"></div>
<div style="position:absolute;left:151px;top:858.9000000000001px;width:20px;height:20px;border:2px solid #1c3260;border-radius:6px;background:#fff"></div>
<svg style="left:227px;top:858.4000000000001px;" width="19" height="19" viewBox="0 0 19 19"><path d="M9.5 1.6a7.6 7.6 0 1 1 -3.9 14.1l-3.6 1.4 1.1-3.3A7.6 7.6 0 0 1 9.5 1.6z" fill="none" stroke="#c9c9d0" stroke-width="1.3"/><circle cx="6.3" cy="9.3" r=".95" fill="#c9c9d0"/><circle cx="9.5" cy="9.3" r=".95" fill="#c9c9d0"/><circle cx="12.7" cy="9.3" r=".95" fill="#c9c9d0"/></svg>
<div class="txt" style="left:287.70px;top:859.31px;font-size:17px;color:#3a4a6e;letter-spacing:0.49px;">Logout button partially hidden</div>
<div class="txt" style="left:587.75px;top:850.26px;font-size:17px;color:#3a4a6e;letter-spacing:0.50px;">KANBAN - software</div>
<div class="txt" style="left:588.75px;top:867.01px;font-size:17px;color:#3a4a6e;letter-spacing:0.49px;">development</div>
<div class="txt" style="left:888.25px;top:859.51px;font-size:17px;color:#3a4a6e;letter-spacing:0.42px;">Ted Technical Director</div>
<div style="position:absolute;left:1176px;top:847.0000000000001px;width:275px;height:42.2px;background:#fde9e0;border:1px solid #fbd2bd"></div>
<div style="position:absolute;left:1177px;top:848.0000000000001px;width:272px;height:40px;background:#fef0ea;border:1px solid #fbe9dc;border-radius:8px"></div>
<div style="position:absolute;left:1177px;top:848.0000000000001px;width:11px;height:40px;background:#fd7e3f;border-radius:8px 0 0 8px"></div>
<div class="txt" style="left:1199.40px;top:859.26px;font-size:17px;color:#fd7e3f;font-weight:bold;letter-spacing:0.17px;">Supervisor review</div>
<svg style="left:1489.5px;top:856.9000000000001px;" width="18" height="19" viewBox="0 0 18 19"><rect x="1.9" y="3.1" width="14.2" height="14" rx="1.6" fill="none" stroke="#f0196a" stroke-width="1.7"/><path d="M2 7.2h14" stroke="#f0196a" stroke-width="1.5"/><path d="M5.5 1v3.2M12.5 1v3.2" stroke="#f0196a" stroke-width="1.5"/></svg>
<div class="txt" style="left:1540.30px;top:860.41px;font-size:17px;color:#f0196a;letter-spacing:0.82px;">21 Jul 2022</div>
<svg style="left:1801px;top:859.4000000000001px;" width="6" height="14" viewBox="0 0 6 14"><circle cx="3.4" cy="3.5" r="1.5" fill="#0b1f46"/><circle cx="3.4" cy="7.75" r="1.5" fill="#0b1f46"/><circle cx="3.4" cy="12" r="1.5" fill="#0b1f46"/></svg>
<div style="position:absolute;left:106.5px;top:910.1px;width:1723px;height:83.4px;background:#fef0ea"></div>
<div style="position:absolute;left:106.5px;top:992.5px;width:1723px;height:1px;background:#fcd6c2"></div>
<div style="position:absolute;left:215px;top:910.1px;width:1px;height:83.4px;background:#fcd6c2"></div>
<div style="position:absolute;left:263px;top:910.1px;width:1px;height:83.4px;background:#fcd6c2"></div>
<div style="position:absolute;left:563px;top:910.1px;width:1px;height:83.4px;background:#fcd6c2"></div>
<div style="position:absolute;left:863px;top:910.1px;width:1px;height:83.4px;background:#fcd6c2"></div>
<div style="position:absolute;left:1163px;top:910.1px;width:1px;height:83.4px;background:#fcd6c2"></div>
<div style="position:absolute;left:1463px;top:910.1px;width:1px;height:83.4px;background:#fcd6c2"></div>
<div style="position:absolute;left:1763px;top:910.1px;width:1px;height:83.4px;background:#fcd6c2"></div>
<div style="position:absolute;left:107px;top:910.1px;width:11px;height:82.4px;background:#fd7e3f"></div>
<div style="position:absolute;left:151px;top:942.3000000000001px;width:20px;height:20px;border:2px solid #1c3260;border-radius:6px;background:#fff"></div>
<svg style="left:227px;top:941.8000000000001px;" width="19" height="19" viewBox="0 0 19 19"><path d="M9.5 1.6a7.6 7.6 0 1 1 -3.9 14.1l-3.6 1.4 1.1-3.3A7.6 7.6 0 0 1 9.5 1.6z" fill="none" stroke="#c9c9d0" stroke-width="1.3"/><circle cx="6.3" cy="9.3" r=".95" fill="#c9c9d0"/><circle cx="9.5" cy="9.3" r=".95" fill="#c9c9d0"/><circle cx="12.7" cy="9.3" r=".95" fill="#c9c9d0"/></svg>
<div class="txt" style="left:288.70px;top:942.71px;font-size:17px;color:#3a4a6e;letter-spacing:0.49px;">Setting change not saving</div>
<div class="txt" style="left:587.75px;top:933.66px;font-size:17px;color:#3a4a6e;letter-spacing:0.50px;">KANBAN - software</div>
<div class="txt" style="left:588.75px;top:950.41px;font-size:17px;color:#3a4a6e;letter-spacing:0.49px;">development</div>
<div class="txt" style="left:888.25px;top:942.91px;font-size:17px;color:#3a4a6e;letter-spacing:0.42px;">Ted Technical Director</div>
<div style="position:absolute;left:1176px;top:930.4000000000001px;width:275px;height:42.2px;background:#fde9e0;border:1px solid #fbd2bd"></div>
<div style="position:absolute;left:1177px;top:931.4000000000001px;width:272px;height:40px;background:#fef0ea;border:1px solid #fbe9dc;border-radius:8px"></div>
<div style="position:absolute;left:1177px;top:931.4000000000001px;width:11px;height:40px;background:#fd7e3f;border-radius:8px 0 0 8px"></div>
<div class="txt" style="left:1199.40px;top:942.66px;font-size:17px;color:#fd7e3f;font-weight:bold;letter-spacing:0.17px;">Supervisor review</div>
<svg style="left:1489.5px;top:940.3000000000001px;" width="18" height="19" viewBox="0 0 18 19"><rect x="1.9" y="3.1" width="14.2" height="14" rx="1.6" fill="none" stroke="#f0196a" stroke-width="1.7"/><path d="M2 7.2h14" stroke="#f0196a" stroke-width="1.5"/><path d="M5.5 1v3.2M12.5 1v3.2" stroke="#f0196a" stroke-width="1.5"/></svg>
<div class="txt" style="left:1540.30px;top:943.81px;font-size:17px;color:#f0196a;letter-spacing:0.82px;">22 Jul 2022</div>
<svg style="left:1801px;top:942.8000000000001px;" width="6" height="14" viewBox="0 0 6 14"><circle cx="3.4" cy="3.5" r="1.5" fill="#0b1f46"/><circle cx="3.4" cy="7.75" r="1.5" fill="#0b1f46"/><circle cx="3.4" cy="12" r="1.5" fill="#0b1f46"/></svg>
<div style="position:absolute;left:106.5px;top:993.6px;width:1723px;height:1.4px;background:#fef0ea"></div>
<div style="position:absolute;left:107px;top:993.6px;width:11px;height:1.4px;background:#fd7e3f"></div>
<div style="position:absolute;left:1764px;top:434.5px;width:19px;height:560px;background:linear-gradient(to right,rgba(60,40,40,0),rgba(60,40,40,.04) 55%,rgba(60,40,40,.16))"></div>
<div style="position:absolute;left:1782.5px;top:434.5px;width:1.2px;height:560px;background:rgba(120,80,80,.15)"></div>
<svg style="left:1796.5px;top:456.5px;" width="20" height="18" viewBox="0 0 20 18"><path fill="#17dc8f" d="M0.8 8h6v1.8h-6zM2.9 5.9h1.8v6h-1.8z"/><rect x="9.6" y="1" width="7.6" height="15.6" rx="1.2" fill="none" stroke="#17dc8f" stroke-width="1.9"/><path d="M9.6 6.3h7.6M9.6 11.3h7.6" stroke="#17dc8f" stroke-width="1.7"/></svg>
<div class="txt" style="left:1313.00px;top:1028.05px;font-size:21.5px;color:#1c2f5a;letter-spacing:0.77px;">1-10 of 16 items</div>
<svg style="left:1501px;top:1031px;" width="14" height="17" viewBox="0 0 14 17"><path d="M11.5 1.5L3.2 8.5l8.3 7" fill="none" stroke="#1c2f5a" stroke-width="1.6"/></svg>
<div style="position:absolute;left:1527.3px;top:1019px;width:38.6px;height:38.8px;border:1.5px solid #1a7cff;border-radius:3px;background:#fff"></div>
<svg style="left:1540px;top:1027px;" width="12" height="19" viewBox="0 0 12 19"><path fill="#1a7cff" d="M2.4 5.6L7.4 2h2.5v15.1H7.2V5.6L3.8 8z"/></svg>
<div class="txt" style="left:1579.70px;top:1028.05px;font-size:21.5px;color:#1c2f5a;">2</div>
<svg style="left:1616px;top:1031px;" width="14" height="17" viewBox="0 0 14 17"><path d="M2.5 1.5l8.3 7-8.3 7" fill="none" stroke="#1c2f5a" stroke-width="1.6"/></svg>
<div style="position:absolute;left:1644.5px;top:1018px;width:150px;height:38.6px;border:1px solid #e3e7ee;border-radius:3px;background:#fff"></div>
<div class="txt" style="left:1657.80px;top:1027.05px;font-size:21.5px;color:#1c2f5a;letter-spacing:0.54px;">10 / page</div>
<svg style="left:1760.5px;top:1032.5px;" width="17" height="13" viewBox="0 0 17 13"><path d="M1.5 1.5l7 10 7-10" fill="none" stroke="#1c2f5a" stroke-width="1.9"/></svg>
<div style="position:absolute;left:1769px;top:858.75px;width:70px;height:70px;border-radius:50%;background:linear-gradient(70deg,#087ae6,#36c2df)"></div>
<svg style="left:1789px;top:879px;" width="30" height="30" viewBox="0 0 30 30"><path fill="#fff" d="M15 2C22.5 2 28.5 5 28.5 12.5S23 22.5 15.5 22.5c-1.5 0-3 0-4.3-.3L4.5 25.5 6.6 21C3.5 19.5 1.5 16.5 1.5 12.5 1.5 5 7.5 2 15 2z"/></svg>
<div style="position:absolute;left:1818.5px;top:906px;width:19px;height:19px;border-radius:50%;background:#3ff550;border:2px solid #fff"></div>
<div style="position:absolute;left:1801.9px;top:976px;width:59.2px;height:59.2px;border-radius:50%;background:#01dc95;box-shadow:0 4px 30px rgba(20,40,80,.16)"></div>
<div style="position:absolute;left:1820px;top:1003.7px;width:24px;height:3.8px;background:#fff"></div>
<div style="position:absolute;left:1830.1px;top:993.6px;width:3.8px;height:24px;background:#fff"></div>
<svg style="left:1860px;top:1042px;" width="19" height="19" viewBox="0 0 19 19"><path d="M1.2 6V1.2H6M13 1.2h4.8V6M17.8 13v4.8H13M6 17.8H1.2V13" fill="none" stroke="#adb2c7" stroke-width="2"/></svg>
</body></html>
